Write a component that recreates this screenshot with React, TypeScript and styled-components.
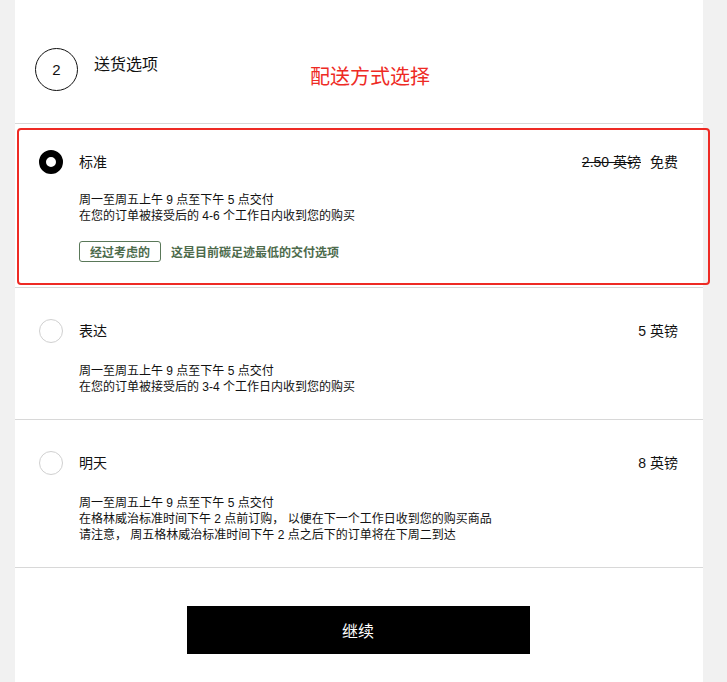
import React from "react";
import styled, { createGlobalStyle } from "styled-components";

const GlobalStyle = createGlobalStyle`
  html, body {
    margin: 0;
    padding: 0;
    background: #f1f1f1;
  }
  body {
    font-family: "Liberation Sans", "Noto Sans CJK SC", Arial, sans-serif;
    color: #111;
  }
  * { box-sizing: border-box; }
`;

const Page = styled.div`
  display: flex;
  min-height: 682px;
  padding-left: 15px;
`;

const Panel = styled.main`
  width: 688px;
  background: #fff;
  display: flex;
  flex-direction: column;
  min-height: 682px;
`;

const Header = styled.header`
  position: relative;
  display: flex;
  align-items: flex-start;
  gap: 16px;
  padding: 48px 24px 32px 20px;
  border-bottom: 1px solid #d8d8d8;
`;

const StepCircle = styled.div`
  width: 43px;
  height: 43px;
  border: 1px solid #111;
  border-radius: 50%;
  display: flex;
  align-items: center;
  justify-content: center;
  font-size: 15px;
`;

const HeaderTitle = styled.h2`
  margin: 5px 0 0;
  font-size: 16px;
  line-height: 24px;
  font-weight: 400;
`;

const Annotation = styled.span`
  position: absolute;
  left: 295px;
  top: 63px;
  font-size: 20px;
  line-height: 28px;
  color: #ee2a24;
`;

const Option = styled.section<{ $top: number }>`
  position: relative;
  padding: ${(p) => p.$top}px 25px 24px 24px;
  border-bottom: 1px solid #d8d8d8;
`;

const Highlight = styled.div`
  position: absolute;
  left: 2px;
  top: 4px;
  right: -7px;
  bottom: 2px;
  border: 2px solid #ee2a24;
  border-radius: 4px;
  pointer-events: none;
`;

const TitleRow = styled.div`
  display: flex;
  align-items: center;
  height: 24px;
`;

const Radio = styled.span<{ $checked?: boolean }>`
  width: 24px;
  height: 24px;
  border-radius: 50%;
  flex: none;
  border: ${(p) => (p.$checked ? "7.5px solid #000" : "1px solid #d0d0d0")};
  background: #fff;
  margin-right: 16px;
`;

const OptionTitle = styled.span`
  font-size: 14px;
  line-height: 24px;
  flex: 1;
`;

const Price = styled.span`
  display: flex;
  gap: 9px;
  font-size: 14px;
  line-height: 24px;
`;

const OldPrice = styled.s`
  text-decoration-thickness: 1px;
`;

const Desc = styled.div<{ $gap: number }>`
  margin: ${(p) => p.$gap}px 0 0 40px;
  font-size: 12px;
  line-height: 16px;
`;

const TagRow = styled.div`
  display: flex;
  align-items: center;
  gap: 10px;
  margin: 17px 0 1px 40px;
  color: #4d6b4c;
  font-size: 12px;
  font-weight: 700;
`;

const Tag = styled.span`
  border: 1px solid #5a7859;
  border-radius: 3px;
  height: 21px;
  padding: 0 10px;
  display: flex;
  align-items: center;
`;

const Footer = styled.div`
  display: flex;
  justify-content: center;
  padding-top: 38px;
`;

const Continue = styled.button`
  width: 343px;
  height: 48px;
  margin-left: -2px;
  background: #000;
  color: #fff;
  border: none;
  font-family: inherit;
  font-size: 16px;
  cursor: pointer;
`;

type Opt = {
  title: string;
  price: React.ReactNode;
  lines: string[];
  checked?: boolean;
  top: number;
  gap: number;
};

const options: Opt[] = [
  {
    title: "标准",
    price: (
      <>
        <OldPrice>2.50 英镑</OldPrice>
        <span>免费</span>
      </>
    ),
    lines: ["周一至周五上午 9 点至下午 5 点交付", "在您的订单被接受后的 4-6 个工作日内收到您的购买"],
    checked: true,
    top: 26,
    gap: 18,
  },
  {
    title: "表达",
    price: <span>5 英镑</span>,
    lines: ["周一至周五上午 9 点至下午 5 点交付", "在您的订单被接受后的 3-4 个工作日内收到您的购买"],
    top: 31,
    gap: 20,
  },
  {
    title: "明天",
    price: <span>8 英镑</span>,
    lines: [
      "周一至周五上午 9 点至下午 5 点交付",
      "在格林威治标准时间下午 2 点前订购， 以便在下一个工作日收到您的购买商品",
      "请注意， 周五格林威治标准时间下午 2 点之后下的订单将在下周二到达",
    ],
    top: 31,
    gap: 20,
  },
];

export default function App() {
  return (
    <>
      <GlobalStyle />
      <Page>
        <Panel>
          <Header>
            <StepCircle>2</StepCircle>
            <HeaderTitle>送货选项</HeaderTitle>
            <Annotation>配送方式选择</Annotation>
          </Header>
          {options.map((o) => (
            <Option key={o.title} $top={o.top}>
              <TitleRow>
                <Radio $checked={o.checked} />
                <OptionTitle>{o.title}</OptionTitle>
                <Price>{o.price}</Price>
              </TitleRow>
              <Desc $gap={o.gap}>
                {o.lines.map((l) => (
                  <div key={l}>{l}</div>
                ))}
              </Desc>
              {o.checked && (
                <>
                  <TagRow>
                    <Tag>经过考虑的</Tag>
                    <span>这是目前碳足迹最低的交付选项</span>
                  </TagRow>
                  <Highlight />
                </>
              )}
            </Option>
          ))}
          <Footer>
            <Continue>继续</Continue>
          </Footer>
        </Panel>
      </Page>
    </>
  );
}
